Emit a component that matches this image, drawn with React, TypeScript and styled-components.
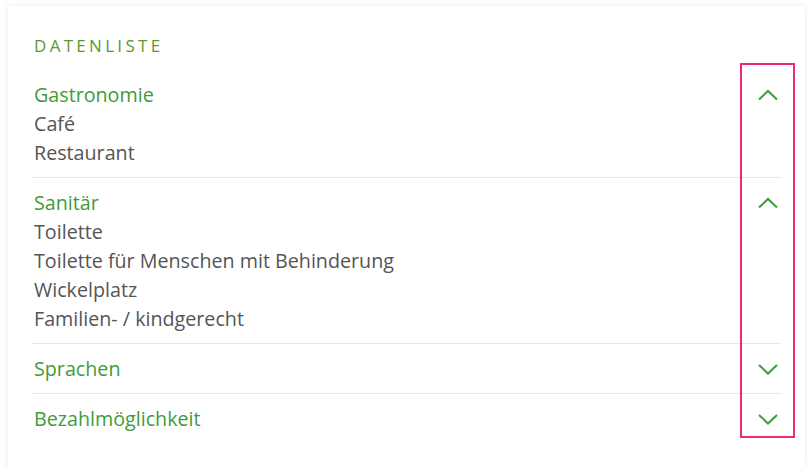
import styled, { createGlobalStyle } from 'styled-components';

const GlobalStyle = createGlobalStyle`
  html, body {
    margin: 0;
    padding: 0;
    background: #ffffff;
    font-family: 'Open Sans', 'Noto Sans', sans-serif;
  }
`;

const Page = styled.div`
  padding: 6px 6px 0 8px;
`;

const Card = styled.section`
  position: relative;
  box-sizing: border-box;
  width: 797px;
  height: 461px;
  padding: 28px 24px 24px;
  background: #fff;
  box-shadow: 0 0 6px rgba(0, 0, 0, 0.09);
`;

const Heading = styled.h2`
  margin: 0 0 12px 2px;
  font-size: 17px;
  line-height: 24px;
  font-weight: 400;
  letter-spacing: 3.3px;
  color: #5c9a2c;
`;

const List = styled.div`
  display: flex;
  flex-direction: column;
`;

const Group = styled.div`
  display: flex;
  justify-content: space-between;
  align-items: flex-start;
  padding: 10px 2px 10px 2px;
  border-top: 1px solid #e6e6e6;

  &:first-child {
    border-top: none;
  }
`;

const GroupBody = styled.div`
  display: flex;
  flex-direction: column;
  font-size: 19.7px;
  line-height: 29px;
`;

const GroupTitle = styled.span`
  color: #3f9b3a;
`;

const Entry = styled.span`
  color: #555555;
`;

const Toggle = styled.span`
  display: flex;
  align-items: center;
  justify-content: center;
  width: 22px;
  height: 29px;
  color: #3a9d3a;
`;

const Highlight = styled.div`
  position: absolute;
  left: 732px;
  top: 57px;
  width: 51px;
  height: 371px;
  border: 2px solid #ea2a7b;
  pointer-events: none;
`;

const Chevron = ({ open }: { open: boolean }) => (
  <svg width="22" height="14" viewBox="0 0 22 14" fill="none">
    <path
      d={open ? 'M2 11.5 L11 3 L20 11.5' : 'M2 3 L11 11.5 L20 3'}
      stroke="currentColor"
      strokeWidth="2"
    />
  </svg>
);

const groups = [
  { title: 'Gastronomie', open: true, items: ['Café', 'Restaurant'] },
  {
    title: 'Sanitär',
    open: true,
    items: ['Toilette', 'Toilette für Menschen mit Behinderung', 'Wickelplatz', 'Familien- / kindgerecht'],
  },
  { title: 'Sprachen', open: false, items: [] },
  { title: 'Bezahlmöglichkeit', open: false, items: [] },
];

export default function App() {
  return (
    <Page>
      <GlobalStyle />
      <Card>
        <Heading>DATENLISTE</Heading>
        <List>
          {groups.map((g) => (
            <Group key={g.title}>
              <GroupBody>
                <GroupTitle>{g.title}</GroupTitle>
                {g.open && g.items.map((item) => <Entry key={item}>{item}</Entry>)}
              </GroupBody>
              <Toggle>
                <Chevron open={g.open} />
              </Toggle>
            </Group>
          ))}
        </List>
        <Highlight />
      </Card>
    </Page>
  );
}
